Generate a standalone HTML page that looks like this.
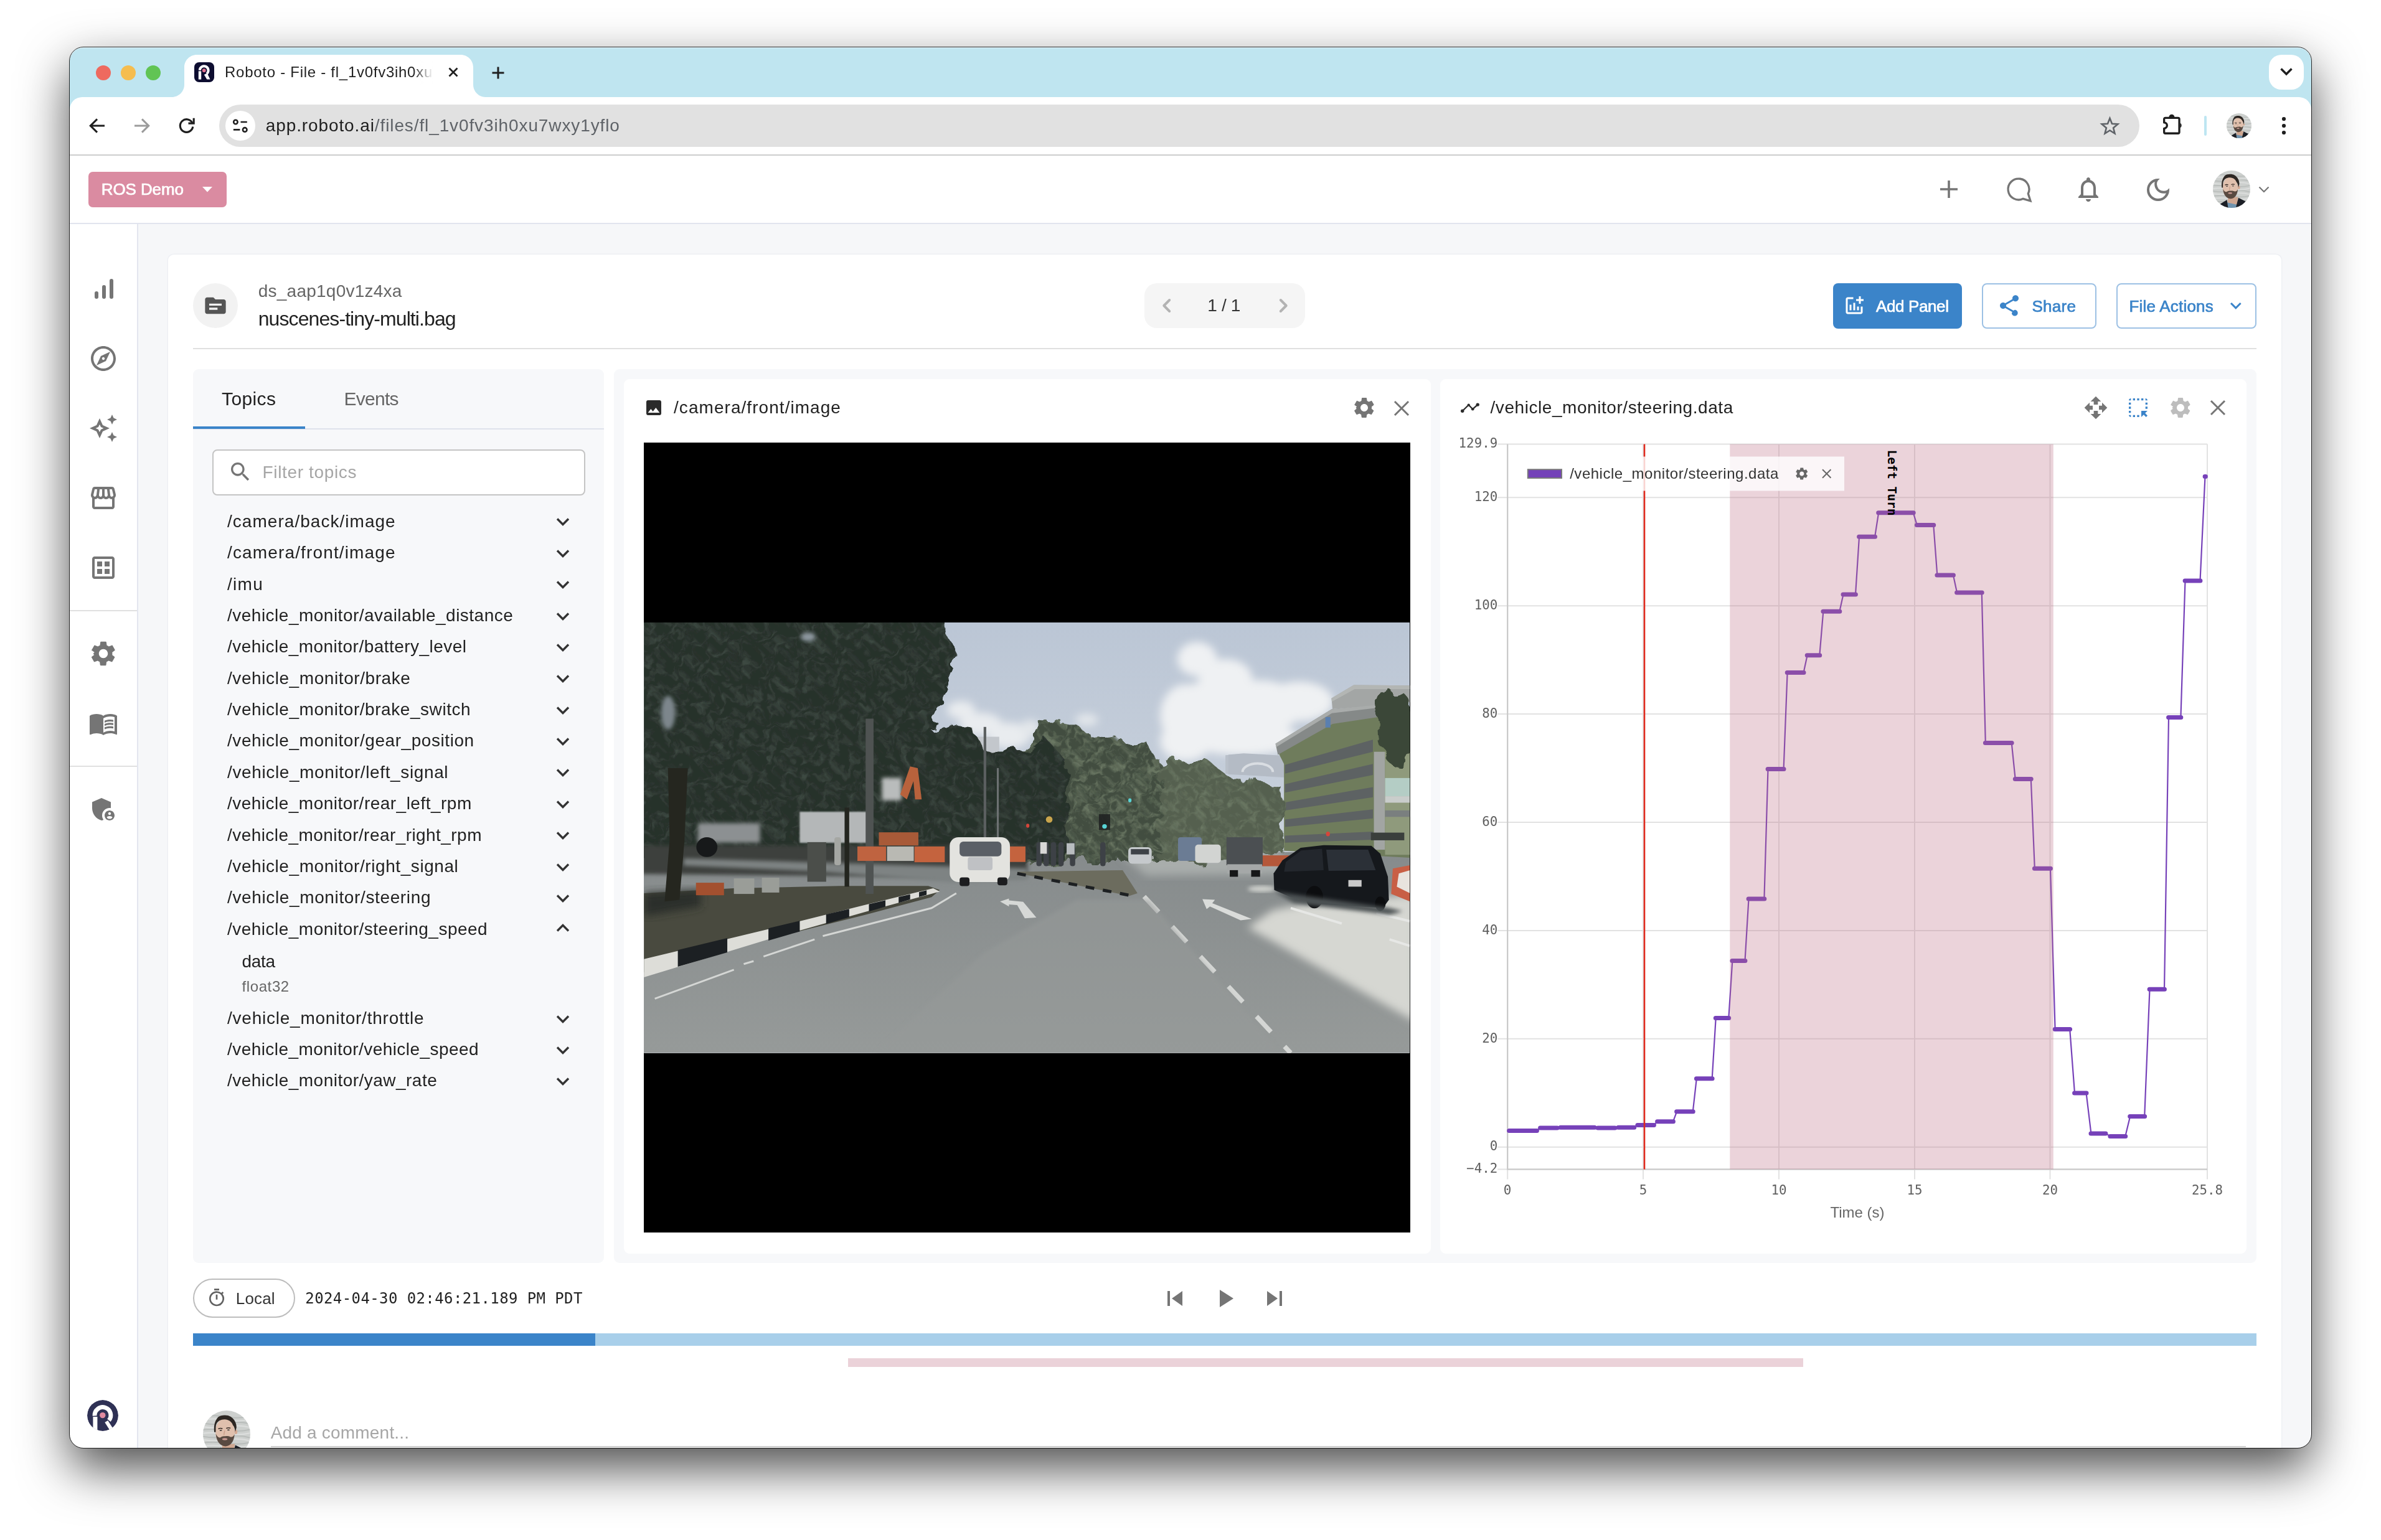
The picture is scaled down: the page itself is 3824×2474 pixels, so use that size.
<!DOCTYPE html>
<html lang="en"><head><meta charset="utf-8"><title>Roboto - File</title>
<style>
*{box-sizing:border-box;margin:0;padding:0}
html,body{width:3824px;height:2474px;overflow:hidden;background:#fff}
body{position:relative;font-family:"Liberation Sans",sans-serif;color:#222}
.a{position:absolute}
.t{position:absolute;white-space:pre}
#shadow{left:112px;top:75px;width:3600px;height:2251px;border-radius:22px;box-shadow:0 33px 80px rgba(0,0,0,.7)}
#win{left:0;top:0;width:3824px;height:2474px;clip-path:inset(75.900px 112px 148px 112px round 22px);background:#f6f7f9}
#winborder{left:110.800px;top:74.700px;width:3602.400px;height:2252.500px;border-radius:23px;border:1.200px solid rgba(0,0,0,.8);box-shadow:inset 0 1.200px 0 rgba(255,255,255,.5)}
svg{position:absolute;overflow:visible}
.ic{fill:#757575}
#texts{position:absolute;left:0;top:0;width:3824px;height:2474px;will-change:transform}

</style></head>
<body>
<div id="shadow" class="a"></div>
<div id="win" class="a">
<!-- ===== Chrome tab strip ===== -->
<div class="a" style="left:112px;top:75px;width:3600px;height:100px;background:#bfe5f0"></div>
<div class="a" style="left:154.2px;top:105px;width:24px;height:24px;border-radius:50%;background:#ee6a5f"></div>
<div class="a" style="left:193.8px;top:105px;width:24px;height:24px;border-radius:50%;background:#f5bd4f"></div>
<div class="a" style="left:233.8px;top:105px;width:24px;height:24px;border-radius:50%;background:#61c454"></div>
<!-- active tab -->
<svg style="left:276px;top:88px" width="504" height="68" viewBox="0 0 504 68"><path d="M0 68 C11 68 20 59 20 48 L20 20 C20 9 29 0 40 0 L464 0 C475 0 484 9 484 20 L484 48 C484 59 493 68 504 68 Z" fill="#fff"/></svg>
<!-- favicon -->
<svg style="left:312px;top:99.800px" width="32" height="32" viewBox="0 0 32 32"><rect width="32" height="32" rx="7.800" fill="#0d0d30"/><path d="M8.800 12.900A6.900 6.900 0 1 1 20.140 18.390" stroke="#fff" stroke-width="4" fill="none"/><path d="M15.800 19.900L20.700 17.500 25.500 27.600H20.300z" fill="#fff"/><rect x="6.800" y="14.300" width="4.400" height="13.300" fill="#fff"/><circle cx="15.750" cy="13.150" r="2.900" fill="#e0718f"/></svg>
<div class="a" style="left:664px;top:96px;width:36px;height:40px;z-index:5;background:linear-gradient(90deg,rgba(255,255,255,0),#fff 88%)"></div>
<svg style="left:720px;top:108px" width="16" height="16" viewBox="0 0 16 16"><path d="M1.5 1.5l13 13M14.5 1.5l-13 13" stroke="#1f1f1f" stroke-width="2.8" fill="none"/></svg>
<svg style="left:790px;top:106.5px" width="20" height="20" viewBox="0 0 20 20"><path d="M10 0.5v19M0.5 10h19" stroke="#1f1f1f" stroke-width="3" fill="none"/></svg>
<div class="a" style="left:3644px;top:88px;width:56px;height:56px;border-radius:20px;background:#fff"></div>
<svg style="left:3661px;top:108px" width="22" height="14" viewBox="0 0 22 14"><path d="M2.5 2.5l8.5 8.5 8.5-8.5" stroke="#1f1f1f" stroke-width="3.4" fill="none"/></svg>
<!-- ===== toolbar ===== -->
<div class="a" style="left:112px;top:156px;width:3600px;height:94px;background:#fff;border-radius:20px 20px 0 0"></div>
<div class="a" style="left:112px;top:248px;width:3600px;height:2px;background:#cfcfcf"></div>
<!-- back / fwd / reload -->
<svg style="left:143px;top:189px" width="26" height="26" viewBox="0 0 26 26"><path d="M25 13H3.500M13 2.300L2.300 13 13 23.700" stroke="#1f1f1f" stroke-width="3.100" fill="none"/></svg>
<svg style="left:215px;top:189px" width="26" height="26" viewBox="0 0 26 26"><path d="M1 13h21.500M13 2.300L23.700 13 13 23.700" stroke="#9b9b9b" stroke-width="3.100" fill="none"/></svg>
<svg style="left:287px;top:189px" width="26" height="26" viewBox="0 0 26 26"><path d="M22.150 9.100A10.300 10.300 0 1 0 22.800 14.600" stroke="#1f1f1f" stroke-width="3.100" fill="none"/><path d="M24.200 0.800V9.100H15.500" stroke="#1f1f1f" stroke-width="3.100" fill="none"/></svg>
<!-- omnibox -->
<div class="a" style="left:352px;top:168px;width:3083.5px;height:68px;border-radius:34px;background:#e1e1e1"></div>
<div class="a" style="left:361.800px;top:177.800px;width:48.400px;height:48.400px;border-radius:50%;background:#fff"></div>
<svg style="left:372px;top:188px" width="28" height="28" viewBox="0 0 28 28"><circle cx="6.400" cy="8" r="3.200" stroke="#1f1f1f" stroke-width="2.600" fill="none"/><path d="M14.500 8h10.300" stroke="#1f1f1f" stroke-width="2.700"/><circle cx="21.200" cy="20.400" r="3.300" stroke="#1f1f1f" stroke-width="2.600" fill="none"/><path d="M2.900 20.400h10.500" stroke="#1f1f1f" stroke-width="2.700"/></svg>
<svg style="left:3371.500px;top:185.500px" width="33" height="33" viewBox="0 0 33 33"><path d="M16.50 4.10L19.97 12.83L29.34 13.43L22.11 19.42L24.44 28.52L16.50 23.50L8.56 28.52L10.89 19.42L3.66 13.43L13.03 12.83Z" stroke="#5f6368" stroke-width="2.600" fill="none" stroke-linejoin="miter"/></svg>
<!-- extensions puzzle -->
<svg style="left:3470px;top:182px" width="40" height="38" viewBox="0 0 40 38"><path d="M5.650 14.900V9.350a2 2 0 0 1 2-2H28.050a2 2 0 0 1 2 2V30.250a2 2 0 0 1-2 2H7.650a2 2 0 0 1-2-2V24.300A4.700 4.700 0 0 0 5.650 14.900Z" fill="none" stroke="#1f1f1f" stroke-width="3.300" stroke-linejoin="round"/><path d="M13.400 6.300A4.500 4.500 0 0 1 22.400 6.300ZM31.400 15.600A4 4.400 0 0 1 31.400 23.600Z" fill="#1f1f1f"/></svg>
<div class="a" style="left:3540.200px;top:186px;width:3.800px;height:32px;border-radius:2px;background:#bde6f2"></div>
<svg style="left:3576px;top:182px" width="40" height="40"><use href="#ava" width="40" height="40"/></svg>
<svg style="left:3661.800px;top:186px" width="12" height="32" viewBox="0 0 12 32"><circle cx="6" cy="5" r="3.100" fill="#1f1f1f"/><circle cx="6" cy="16" r="3.100" fill="#1f1f1f"/><circle cx="6" cy="27" r="3.100" fill="#1f1f1f"/></svg>
<!-- ===== App header ===== -->
<div class="a" style="left:112px;top:250.500px;width:3600px;height:108px;background:#fff"></div>
<div class="a" style="left:112px;top:357.500px;width:3600px;height:2.500px;background:#e1e4ee"></div>
<div class="a" style="left:142px;top:276px;width:222px;height:56.500px;border-radius:7px;background:#da8ba1"></div>
<svg style="left:324.500px;top:300px" width="16" height="9" viewBox="0 0 16 9"><path d="M0 0h16L8 8.500z" fill="#fff"/></svg>
<!-- header icons -->
<svg style="left:3114px;top:288.100px" width="32" height="32" viewBox="0 0 32 32"><path d="M16 2v28M2 16h28" stroke="#757575" stroke-width="3.600" fill="none"/></svg>
<svg style="left:3220px;top:283px" width="46" height="46" viewBox="0 0 46 46"><path d="M29.100 36.300A16.900 16.900 0 1 1 37.300 28.100L41 39.800Z" stroke="#757575" stroke-width="3.300" fill="none" stroke-linejoin="miter"/></svg>
<svg style="left:3330px;top:280px" width="48" height="48" viewBox="0 0 24 24"><path class="ic" d="M12 22c1.100 0 2-.9 2-2h-4c0 1.100.9 2 2 2zm6-6v-5c0-3.070-1.630-5.640-4.500-6.320V4c0-.83-.67-1.500-1.500-1.500s-1.500.67-1.500 1.500v.68C7.640 5.360 6 7.920 6 11v5l-2 2v1h16v-1l-2-2zm-2 1H8v-6c0-2.480 1.510-4.500 4-4.500s4 2.020 4 4.500v6z"/></svg>
<svg style="left:3442px;top:280.500px" width="48" height="48" viewBox="0 0 24 24"><path class="ic" d="M9.370 5.510A7.350 7.350 0 0 0 9.100 7.500c0 4.080 3.320 7.400 7.400 7.400.68 0 1.350-.09 1.990-.27A7.014 7.014 0 0 1 12 19c-3.860 0-7-3.140-7-7 0-2.930 1.810-5.450 4.370-6.490zM12 3a9 9 0 1 0 9 9c0-.46-.04-.92-.1-1.360a5.389 5.389 0 0 1-4.400 2.260 5.403 5.403 0 0 1-3.140-9.800c-.44-.06-.9-.1-1.360-.1z"/></svg>
<svg style="left:3554px;top:274px" width="60" height="60"><use href="#ava" width="60" height="60"/></svg>
<svg style="left:3627px;top:299px" width="18" height="11" viewBox="0 0 18 11"><path d="M1.500 1.500l7.500 7.500 7.500-7.500" stroke="#757575" stroke-width="2.200" fill="none"/></svg>
<!-- ===== Sidebar ===== -->
<div class="a" style="left:112px;top:360px;width:108.500px;height:1970px;background:#fff"></div>
<div class="a" style="left:220px;top:360px;width:2px;height:1970px;background:#e3e6ef"></div>
<div class="a" style="left:112px;top:980px;width:108px;height:2px;background:#e0e0e0"></div>
<div class="a" style="left:112px;top:1230px;width:108px;height:2px;background:#e0e0e0"></div>
<!-- bars -->
<svg style="left:142px;top:440px" width="48" height="48" viewBox="0 0 48 48"><rect x="10" y="28" width="6" height="12" rx="3" class="ic"/><rect x="22" y="18" width="6" height="22" rx="3" class="ic"/><rect x="34" y="8" width="6" height="32" rx="3" class="ic"/></svg>
<svg style="left:142px;top:552px" width="48" height="48" viewBox="0 0 24 24"><path class="ic" d="M12 2C6.480 2 2 6.480 2 12s4.480 10 10 10 10-4.480 10-10S17.520 2 12 2zm0 18c-4.410 0-8-3.590-8-8s3.590-8 8-8 8 3.590 8 8-3.590 8-8 8zm-5.500-2.500l7.510-3.490L17.500 6.500 9.990 9.990 6.500 17.500zm5.500-6.600c.61 0 1.100.49 1.100 1.100s-.49 1.100-1.100 1.100-1.100-.49-1.100-1.100.49-1.100 1.100-1.100z"/></svg>
<svg style="left:142px;top:664px" width="48" height="48" viewBox="0 0 24 24"><path class="ic" d="M19 9l1.250-2.750L23 5l-2.750-1.250L19 1l-1.250 2.750L15 5l2.750 1.250L19 9zm0 6l-1.250 2.750L15 19l2.750 1.250L19 23l1.250-2.750L23 19l-2.750-1.250L19 15zm-7.500-5.500L9 4 6.500 9.500 1 12l5.500 2.500L9 20l2.500-5.500L17 12l-5.500-2.500zm-1.510 3.490L9 15.170l-.99-2.180L5.830 12l2.180-.99L9 8.830l.99 2.180 2.180.99-2.180.99z"/></svg>
<svg style="left:142px;top:776px" width="48" height="48" viewBox="0 0 24 24"><path class="ic" d="M21.900 8.890l-1.050-4.370c-.22-.9-1-1.520-1.910-1.520H5.050c-.9 0-1.690.63-1.900 1.520L2.100 8.890c-.24 1.020-.02 2.060.62 2.880.8.110.19.190.28.290V19c0 1.100.9 2 2 2h14c1.100 0 2-.9 2-2v-6.940c.09-.9.200-.18.280-.28.640-.82.870-1.870.62-2.890zm-2.990-3.900l1.050 4.370c.1.420.1.840-.25 1.170-.14.180-.44.470-.94.470-.61 0-1.140-.49-1.210-1.140L16.980 5l1.930-.01zM13 5h1.960l.54 4.520c.5.390-.7.780-.33 1.070-.22.260-.54.410-.95.410-.67 0-1.220-.59-1.220-1.310V5zM8.490 9.520L9.040 5H11v4.690c0 .72-.55 1.310-1.290 1.310-.34 0-.65-.15-.89-.41-.25-.29-.37-.68-.33-1.070zm-4.450-.16L5.050 5h1.970l-.58 4.860c-.8.650-.6 1.140-1.210 1.140-.49 0-.8-.29-.93-.47-.27-.32-.36-.75-.26-1.170zM5 19v-6.030c.8.010.15.030.23.030.87 0 1.660-.36 2.240-.95.600.6 1.400.95 2.310.95.870 0 1.650-.36 2.230-.93.590.57 1.390.93 2.290.93.840 0 1.640-.35 2.240-.95.580.59 1.370.95 2.240.95.080 0 .15-.2.230-.03V19H5z"/></svg>
<svg style="left:142px;top:887.500px" width="48" height="48" viewBox="0 0 24 24"><path class="ic" d="M19 3H5c-1.100 0-2 .9-2 2v14c0 1.100.9 2 2 2h14c1.100 0 2-.9 2-2V5c0-1.100-.9-2-2-2zm0 16H5V5h14v14zM7 13h4v4H7zm6 0h4v4h-4zM7 7h4v4H7zm6 0h4v4h-4z"/></svg>
<svg style="left:142px;top:1025.500px" width="48" height="48" viewBox="0 0 24 24"><path class="ic" d="M19.140 12.940c.04-.3.060-.61.060-.94 0-.32-.02-.64-.07-.94l2.030-1.580c.18-.14.230-.41.120-.61l-1.920-3.320c-.12-.22-.37-.29-.59-.22l-2.390.96c-.5-.38-1.030-.7-1.620-.94l-.36-2.540c-.04-.24-.24-.41-.48-.41h-3.840c-.24 0-.43.170-.47.410l-.36 2.540c-.59.240-1.130.57-1.620.94l-2.390-.96c-.22-.08-.47 0-.59.220L2.740 8.870c-.12.210-.8.470.12.610l2.030 1.580c-.5.300-.9.630-.9.940s.2.640.7.940l-2.030 1.580c-.18.140-.23.410-.12.610l1.920 3.320c.12.220.37.290.59.220l2.390-.96c.5.380 1.030.7 1.620.94l.36 2.540c.5.240.24.410.48.410h3.840c.24 0 .44-.17.470-.41l.36-2.540c.59-.24 1.130-.56 1.620-.94l2.390.96c.22.080.47 0 .59-.22l1.920-3.320c.12-.22.070-.47-.12-.61l-2.010-1.580zM12 15.600c-1.980 0-3.600-1.620-3.600-3.600s1.620-3.600 3.600-3.600 3.600 1.620 3.600 3.600-1.620 3.600-3.600 3.600z"/></svg>
<svg style="left:142px;top:1138px" width="48" height="48" viewBox="0 0 24 24"><path class="ic" d="M21 5c-1.110-.35-2.330-.5-3.500-.5-1.950 0-4.050.4-5.500 1.500-1.450-1.100-3.550-1.500-5.500-1.500S2.450 4.900 1 6v14.650c0 .25.250.5.500.5.100 0 .15-.5.250-.05C3.100 20.450 5.050 20 6.500 20c1.950 0 4.050.4 5.500 1.500 1.350-.85 3.800-1.500 5.500-1.500 1.650 0 3.350.3 4.750 1.050.1.050.15.050.25.050.25 0 .5-.25.5-.5V6c-.6-.45-1.250-.75-2-1zm0 13.500c-1.100-.35-2.300-.5-3.500-.5-1.700 0-4.150.65-5.500 1.500V8c1.350-.85 3.800-1.500 5.500-1.500 1.200 0 2.400.15 3.500.5v11.500z"/><path class="ic" d="M17.500 10.500c.88 0 1.730.09 2.500.26V9.240c-.79-.15-1.640-.24-2.500-.24-1.700 0-3.240.29-4.500.83v1.660c1.130-.64 2.700-.99 4.500-.99zM13 12.490v1.660c1.130-.64 2.700-.99 4.500-.99.880 0 1.730.09 2.500.26V11.900c-.79-.15-1.640-.24-2.500-.24-1.700 0-3.240.3-4.500.83zM17.500 14.330c-1.700 0-3.240.29-4.500.83v1.660c1.130-.64 2.700-.99 4.500-.99.880 0 1.730.09 2.500.26v-1.520c-.79-.16-1.640-.24-2.500-.24z"/></svg>
<svg style="left:142px;top:1276px" width="48" height="48" viewBox="0 0 24 24"><path class="ic" d="M17 11c.34 0 .67.040 1 .09V6.270L10.500 3 3 6.270v4.910c0 4.540 3.200 8.790 7.500 9.820.55-.13 1.080-.32 1.600-.55-.69-.98-1.100-2.170-1.100-3.450 0-3.310 2.690-6 6-6z"/><path class="ic" d="M17 13c-2.210 0-4 1.790-4 4s1.790 4 4 4 4-1.790 4-4-1.790-4-4-4zm0 1.380c.62 0 1.120.51 1.120 1.120s-.51 1.120-1.120 1.120-1.120-.51-1.120-1.120.5-1.120 1.120-1.120zm0 5.370c-.93 0-1.740-.46-2.240-1.170.05-.72 1.510-1.080 2.240-1.080s2.190.36 2.240 1.080c-.5.710-1.310 1.170-2.240 1.170z"/></svg>
<!-- roboto logo -->
<svg style="left:140px;top:2248.800px" width="50" height="50" viewBox="0 0 50 50"><clipPath id="lgc"><circle cx="25" cy="25" r="25"/></clipPath><g clip-path="url(#lgc)"><circle cx="25" cy="25" r="25" fill="#2f3155"/><path d="M12.100 25.500A12.900 12.900 0 1 1 34.900 32.800" stroke="#fff" stroke-width="6.900" fill="none"/><path d="M30.800 34.500L40 49" stroke="#fff" stroke-width="5.800"/><rect x="9.400" y="27" width="7" height="24" fill="#fff"/><circle cx="24.800" cy="24.600" r="4.700" fill="#e08aa0"/></g></svg>
<!-- ===== Main card ===== -->
<div class="a" style="left:270px;top:408.500px;width:3394px;height:1960px;background:#fff;border-radius:9px;box-shadow:0 0 0 1.500px #eef0f4"></div>
<div class="a" style="left:310px;top:455px;width:72px;height:72px;border-radius:50%;background:#f2f2f2"></div>
<svg style="left:326px;top:471px" width="40" height="40" viewBox="0 0 24 24"><path fill="#555" d="M20 6h-8l-2-2H4c-1.100 0-1.990.9-1.990 2L2 18c0 1.100.9 2 2 2h16c1.100 0 2-.9 2-2V8c0-1.100-.9-2-2-2zm-6 10H6v-2h8v2zm4-4H6v-2h12v2z"/></svg>
<div class="a" style="left:310px;top:559px;width:3313.500px;height:2px;background:#e0e0e0"></div>
<!-- pager -->
<div class="a" style="left:1838px;top:455px;width:258px;height:72px;border-radius:20px;background:#f5f5f5"></div>
<svg style="left:1865px;top:478px" width="18" height="26" viewBox="0 0 18 26"><path d="M13.200 4L4.300 13 13.200 22" stroke="#b3b3b3" stroke-width="4" fill="none" stroke-linecap="round" stroke-linejoin="round"/></svg>
<svg style="left:2052px;top:478px" width="18" height="26" viewBox="0 0 18 26"><path d="M4.800 4L13.700 13 4.800 22" stroke="#b3b3b3" stroke-width="4" fill="none" stroke-linecap="round" stroke-linejoin="round"/></svg>
<!-- buttons -->
<div class="a" style="left:2944px;top:455px;width:207px;height:72.500px;border-radius:8px;background:#3b84c9"></div>
<svg style="left:2959.500px;top:473.200px" width="36" height="36" viewBox="0 0 24 24"><path fill="#fff" d="M22 5v2h-3v3h-2V7h-3V5h3V2h2v3h3zm-3 14H5V5h6V3H5c-1.100 0-2 .9-2 2v14c0 1.100.9 2 2 2h14c1.100 0 2-.9 2-2v-6h-2v6zm-4-6v4h2v-4h-2zm-4 4h2V9h-2v8zm-2 0v-6H7v6h2z"/></svg>
<div class="a" style="left:3183px;top:455px;width:184px;height:72.500px;border-radius:8px;border:2px solid #9dc1e4;background:#fff"></div>
<svg style="left:3207px;top:471px" width="40" height="40" viewBox="0 0 24 24"><path fill="#3b84c9" d="M18 16.080c-.76 0-1.440.3-1.960.77L8.910 12.700c.05-.23.090-.46.090-.7s-.04-.47-.09-.7l7.050-4.110c.54.5 1.250.81 2.040.81 1.660 0 3-1.340 3-3s-1.340-3-3-3-3 1.340-3 3c0 .24.040.47.090.7L8.040 9.810C7.500 9.310 6.790 9 6 9c-1.660 0-3 1.340-3 3s1.340 3 3 3c.79 0 1.500-.31 2.040-.81l7.120 4.160c-.5.210-.8.430-.8.650 0 1.610 1.310 2.920 2.920 2.920s2.920-1.310 2.920-2.920-1.310-2.920-2.920-2.920z"/></svg>
<div class="a" style="left:3399px;top:455px;width:225px;height:72.500px;border-radius:8px;border:2px solid #9dc1e4;background:#fff"></div>
<svg style="left:3580.500px;top:485px" width="20" height="13" viewBox="0 0 20 13"><path d="M2 2l7.800 7.800 7.800-7.800" stroke="#3b84c9" stroke-width="3" fill="none"/></svg>
<!-- ===== Topics panel ===== -->
<div class="a" style="left:310px;top:592.500px;width:660px;height:1436.500px;border-radius:9px;background:#f7f8fa"></div>
<div class="a" style="left:310px;top:687.500px;width:660px;height:2.500px;background:#dfe2ec"></div>
<div class="a" style="left:310px;top:684.500px;width:180px;height:4.500px;background:#3b84c9"></div>
<div class="a" style="left:340.500px;top:721.500px;width:599px;height:74px;border-radius:8px;border:2px solid #c4c4c4;background:#fff"></div>
<svg style="left:366px;top:738px" width="40" height="40" viewBox="0 0 24 24"><path fill="#757575" d="M15.500 14h-.79l-.28-.27C15.410 12.590 16 11.110 16 9.500 16 5.910 13.090 3 9.500 3S3 5.910 3 9.500 5.910 16 9.500 16c1.610 0 3.090-.59 4.230-1.570l.27.280v.79l5 4.990L20.490 19l-4.990-5zm-6 0C7.010 14 5 11.990 5 9.500S7.010 5 9.500 5 14 7.010 14 9.500 11.990 14 9.500 14z"/></svg>
<svg style="left:892.5px;top:831.4px" width="22" height="14" viewBox="0 0 22 14"><path d="M2 2.500l9 9 9-9" stroke="#333" stroke-width="3.400" fill="none"/></svg>
<svg style="left:892.5px;top:881.8px" width="22" height="14" viewBox="0 0 22 14"><path d="M2 2.500l9 9 9-9" stroke="#333" stroke-width="3.400" fill="none"/></svg>
<svg style="left:892.5px;top:932.1px" width="22" height="14" viewBox="0 0 22 14"><path d="M2 2.500l9 9 9-9" stroke="#333" stroke-width="3.400" fill="none"/></svg>
<svg style="left:892.5px;top:982.5px" width="22" height="14" viewBox="0 0 22 14"><path d="M2 2.500l9 9 9-9" stroke="#333" stroke-width="3.400" fill="none"/></svg>
<svg style="left:892.5px;top:1032.9px" width="22" height="14" viewBox="0 0 22 14"><path d="M2 2.500l9 9 9-9" stroke="#333" stroke-width="3.400" fill="none"/></svg>
<svg style="left:892.5px;top:1083.2px" width="22" height="14" viewBox="0 0 22 14"><path d="M2 2.500l9 9 9-9" stroke="#333" stroke-width="3.400" fill="none"/></svg>
<svg style="left:892.5px;top:1133.6px" width="22" height="14" viewBox="0 0 22 14"><path d="M2 2.500l9 9 9-9" stroke="#333" stroke-width="3.400" fill="none"/></svg>
<svg style="left:892.5px;top:1184.0px" width="22" height="14" viewBox="0 0 22 14"><path d="M2 2.500l9 9 9-9" stroke="#333" stroke-width="3.400" fill="none"/></svg>
<svg style="left:892.5px;top:1234.4px" width="22" height="14" viewBox="0 0 22 14"><path d="M2 2.500l9 9 9-9" stroke="#333" stroke-width="3.400" fill="none"/></svg>
<svg style="left:892.5px;top:1284.7px" width="22" height="14" viewBox="0 0 22 14"><path d="M2 2.500l9 9 9-9" stroke="#333" stroke-width="3.400" fill="none"/></svg>
<svg style="left:892.5px;top:1335.1px" width="22" height="14" viewBox="0 0 22 14"><path d="M2 2.500l9 9 9-9" stroke="#333" stroke-width="3.400" fill="none"/></svg>
<svg style="left:892.5px;top:1385.5px" width="22" height="14" viewBox="0 0 22 14"><path d="M2 2.500l9 9 9-9" stroke="#333" stroke-width="3.400" fill="none"/></svg>
<svg style="left:892.5px;top:1435.8px" width="22" height="14" viewBox="0 0 22 14"><path d="M2 2.500l9 9 9-9" stroke="#333" stroke-width="3.400" fill="none"/></svg>
<svg style="left:892.5px;top:1484.2px" width="22" height="14" viewBox="0 0 22 14"><path d="M2 11.500l9-9 9 9" stroke="#333" stroke-width="3.400" fill="none"/></svg>
<svg style="left:892.5px;top:1629.8px" width="22" height="14" viewBox="0 0 22 14"><path d="M2 2.500l9 9 9-9" stroke="#333" stroke-width="3.400" fill="none"/></svg>
<svg style="left:892.5px;top:1679.5px" width="22" height="14" viewBox="0 0 22 14"><path d="M2 2.500l9 9 9-9" stroke="#333" stroke-width="3.400" fill="none"/></svg>
<svg style="left:892.5px;top:1729.8px" width="22" height="14" viewBox="0 0 22 14"><path d="M2 2.500l9 9 9-9" stroke="#333" stroke-width="3.400" fill="none"/></svg>
<!-- ===== Panels container ===== -->
<div class="a" style="left:986px;top:592.500px;width:2637.500px;height:1436.500px;border-radius:9px;background:#f7f8fa"></div>
<div class="a" style="left:1002px;top:609px;width:1295.500px;height:1404.500px;border-radius:9px;background:#fff"></div>
<div class="a" style="left:2312.500px;top:609px;width:1295.500px;height:1404.500px;border-radius:9px;background:#fff"></div>
<svg style="left:1034px;top:638.500px" width="32" height="32" viewBox="0 0 24 24"><path fill="#2b2b2b" d="M21 19V5c0-1.100-.9-2-2-2H5c-1.100 0-2 .9-2 2v14c0 1.100.9 2 2 2h14c1.100 0 2-.9 2-2zM8.500 13.500l2.500 3.010L14.500 12l4.500 6H5l3.500-4.500z"/></svg>
<svg style="left:2171px;top:635px" width="40" height="40" viewBox="0 0 24 24"><use href="#gear" class="ic"/></svg>
<svg style="left:2239px;top:643.500px" width="24" height="24" viewBox="0 0 24 24"><path d="M1 1l22 22M23 1L1 23" stroke="#757575" stroke-width="3" fill="none"/></svg>
<!-- image panel -->
<div class="a" style="left:1034.200px;top:710.600px;width:1230.500px;height:1269.800px;background:#000"></div>
<svg style="left:1034.3px;top:1000px" width="1230.3" height="692" viewBox="0 0 1230 692">
<defs>
<linearGradient id="sky" x1="0" y1="0" x2="0" y2="1"><stop offset="0" stop-color="#bbc6d5"/><stop offset="1" stop-color="#d7dce3"/></linearGradient>
<linearGradient id="road" x1="0" y1="0" x2="0" y2="1"><stop offset="0" stop-color="#868b8c"/><stop offset="1" stop-color="#969a99"/></linearGradient>
<filter id="b1" x="-5%" y="-5%" width="110%" height="110%"><feGaussianBlur stdDeviation="1.3"/></filter>
<filter id="b6" x="-20%" y="-20%" width="140%" height="140%"><feGaussianBlur stdDeviation="7"/></filter>
<filter id="b3" x="-20%" y="-20%" width="140%" height="140%"><feGaussianBlur stdDeviation="3"/></filter>
<filter id="leaf" x="-5%" y="-5%" width="110%" height="110%"><feTurbulence type="fractalNoise" baseFrequency="0.035" numOctaves="3" seed="4" result="n"/><feDisplacementMap in="SourceGraphic" in2="n" scale="38"/></filter>
<filter id="spk" x="0" y="0" width="100%" height="100%" color-interpolation-filters="sRGB"><feTurbulence type="fractalNoise" baseFrequency="0.07" numOctaves="3" seed="11" result="t"/><feColorMatrix in="t" type="matrix" values="0 0 0 0 0.24  0 0 0 0 0.29  0 0 0 0 0.26  2.4 0 0 0 -1.05" result="c"/><feComposite in="c" in2="SourceGraphic" operator="in"/></filter>
<filter id="spk2" x="0" y="0" width="100%" height="100%" color-interpolation-filters="sRGB"><feTurbulence type="fractalNoise" baseFrequency="0.08" numOctaves="3" seed="5" result="t"/><feColorMatrix in="t" type="matrix" values="0 0 0 0 0.42  0 0 0 0 0.47  0 0 0 0 0.39  2.4 0 0 0 -1.0" result="c"/><feComposite in="c" in2="SourceGraphic" operator="in"/></filter>
<clipPath id="pc"><rect width="1230" height="692"/></clipPath>
</defs>
<g clip-path="url(#pc)">
<rect width="1230" height="692" fill="url(#sky)"/>
<g filter="url(#b6)" fill="#eef0f2">
<ellipse cx="870.2" cy="149.5" rx="40.9" ry="50.0" fill="#eff1f3" />
<ellipse cx="888.4" cy="58.6" rx="31.8" ry="27.3" fill="#eff1f3" />
<ellipse cx="933.9" cy="90.5" rx="43.2" ry="31.8" fill="#eff1f3" />
<ellipse cx="906.6" cy="145.0" rx="63.6" ry="50.0" fill="#eff1f3" />
<ellipse cx="988.4" cy="135.9" rx="68.2" ry="43.2" fill="#eff1f3" />
<ellipse cx="1052.1" cy="126.8" rx="54.5" ry="31.8" fill="#eff1f3" />
<ellipse cx="870.2" cy="190.5" rx="40.9" ry="31.8" fill="#eff1f3" />
<ellipse cx="961.2" cy="185.9" rx="90.9" ry="27.3" fill="#eff1f3" />
<ellipse cx="509.3" cy="140.5" rx="22.7" ry="14.5" fill="#e9ecef" />
<ellipse cx="541.2" cy="163.2" rx="34.1" ry="18.2" fill="#e9ecef" />
<ellipse cx="586.6" cy="181.4" rx="34.1" ry="20.5" fill="#e9ecef" />
<ellipse cx="620.2" cy="170.0" rx="15.9" ry="13.6" fill="#e3e7eb" />
<ellipse cx="711.2" cy="156.4" rx="18.2" ry="10.0" fill="#e3e7eb" />
</g>
<rect x="527.5" y="183.6" width="43.2" height="29.5" fill="#c3c7cc" />
<polygon points="933.9,213.2 961.2,210.9 1031.6,215.5 1031.6,249.5 933.9,242.7" fill="#b9c0ca" />
<rect x="0.0" y="368.8" width="1230.4" height="322.8" fill="url(#road)" />
<polygon points="970,490 1010,462 1060,452 1240,436 1240,642" fill="#d6d7d2" filter="url(#b6)"/>
<ellipse cx="992" cy="428" rx="22" ry="5" fill="#cfd1cd" filter="url(#b3)"/>
<polygon points="765.7,372.3 1024.8,367.7 1024.8,404.1 806.6,406.4" fill="#a9adac" filter="url(#b6)"/>
<polygon points="938.7,212.6 963.1,210.3 1032.9,214.2 1032.9,248.3 938.7,244.1" fill="#b4bbc5" />
<path d="M961.4 240.2 A24.3 13.6 0 0 1 1010.1 240.2" stroke="#d9dde2" stroke-width="4" fill="none"/>
<polygon points="1018.2,207.7 1104.3,155.8 1177.3,146.1 1232.5,142.8 1232.5,378.1 1028.0,366.8 1028.0,227.2" fill="#6f7c5c" />
<polygon points="1029.6,228.8 1170.8,188.3 1170.8,207.7 1029.6,242.8" fill="#5d6263" />
<polygon points="1029.6,259.7 1170.8,227.2 1170.8,245.1 1029.6,273.3" fill="#5d6263" />
<polygon points="1029.6,288.9 1170.8,264.5 1170.8,280.8 1029.6,301.9" fill="#5d6263" />
<polygon points="1029.6,316.5 1170.8,300.2 1170.8,314.8 1029.6,328.5" fill="#5d6263" />
<polygon points="1029.6,342.4 1170.8,335.9 1170.8,348.9 1029.6,353.8" fill="#5d6263" />
<polygon points="1014.4,194.7 1104.3,139.6 1178.9,131.5 1178.9,151.9 1105.9,162.9 1018.2,212.6" fill="#858988" />
<polygon points="1014.4,194.7 1104.3,139.6 1178.9,131.5 1178.9,137.0 1104.9,145.7 1015.7,199.9" fill="#a9acab" />
<polygon points="1104.3,121.7 1140.0,100.6 1232.5,101.3 1232.5,128.2 1178.9,132.4 1105.9,138.9" fill="#a3a6a5" />
<polygon points="1104.3,121.7 1140.0,100.6 1232.5,101.3 1232.5,107.1 1141.6,107.1 1104.9,127.2" fill="#b3b6b4" />
<rect x="1172.4" y="207.7" width="17.9" height="157.4" fill="#a2a5a3" />
<rect x="1190.3" y="207.7" width="42.2" height="165.5" fill="#8f9a7c" />
<rect x="1190.3" y="249.9" width="42.2" height="29.2" fill="#b4cdc5" />
<rect x="1190.3" y="279.1" width="42.2" height="10.4" fill="#c9cdcb" />
<rect x="1190.3" y="301.9" width="42.2" height="10.4" fill="#7a7f7f" />
<rect x="1167.6" y="337.6" width="53.6" height="12.3" fill="#3a3f3c" />
<rect x="1094.5" y="151.9" width="8.1" height="16.9" fill="#5a7fb0" />
<ellipse cx="1208.1" cy="168.8" rx="30.8" ry="60.0" fill="#3b4737" filter="url(#leaf)"/>
<rect x="917.6" y="290.5" width="23.4" height="11.4" fill="#7097c3" />
<g filter="url(#leaf)">
<polygon points="815.7,385.9 815.7,231.4 852.1,220.0 906.6,222.3 933.9,242.7 974.8,254.1 1027.1,267.7 1027.1,372.3" fill="#55604f" />
<polygon points="597.5,385.9 597.5,213.2 629.3,176.8 665.7,154.1 711.2,176.8 752.1,185.9 806.6,190.5 829.3,226.8 829.3,385.9" fill="#434e41" />
<polygon points="815.7,385.9 815.7,231.4 852.1,220.0 906.6,222.3 933.9,242.7 974.8,254.1 1027.1,267.7 1027.1,372.3" fill="#000" filter="url(#spk2)"/>
<polygon points="597.5,385.9 597.5,213.2 629.3,176.8 665.7,154.1 711.2,176.8 752.1,185.9 806.6,190.5 829.3,226.8 829.3,385.9" fill="#000" filter="url(#spk2)"/>
</g>
<g filter="url(#leaf)">
<polygon points="-31.6,-32.3 468.4,-32.3 484.3,13.2 507.1,58.6 486.6,108.6 470.7,145.0 463.9,176.8 500.2,162.3 532.1,174.5 548.0,208.6 586.6,208.6 615.7,204.1 650.2,190.5 677.5,222.3 677.5,381.4 -31.6,381.4" fill="#28302b" />
<polygon points="-31.6,-32.3 468.4,-32.3 484.3,13.2 507.1,58.6 486.6,108.6 470.7,145.0 463.9,176.8 500.2,162.3 532.1,174.5 548.0,208.6 586.6,208.6 615.7,204.1 650.2,190.5 677.5,222.3 677.5,381.4 -31.6,381.4" fill="#000" filter="url(#spk)"/>
</g>
<ellipse cx="263.9" cy="23.2" rx="11.8" ry="7.3" fill="#8d979f" filter="url(#b3)"/>
<ellipse cx="38.9" cy="145.0" rx="11.4" ry="27.3" fill="#7d868c" filter="url(#b3)"/>
<rect x="382.1" y="249.5" width="31.8" height="36.4" fill="#b9bcbc" filter="url(#b3)"/>
<rect x="250.2" y="304.1" width="109.1" height="50.0" fill="#b4b7b8" filter="url(#b1)"/>
<rect x="86.6" y="322.3" width="100.0" height="31.8" fill="#8c9092" filter="url(#b3)"/>
<polygon points="-4.3,358.6 615.7,358.6 615.7,406.4 468.4,408.6 -4.3,404.1" fill="#3c413d" filter="url(#b3)"/>
<polygon points="63.9,379.1 450.2,390.5 615.7,395.0 615.7,413.2 495.7,417.7 268.4,399.5 63.9,390.5" fill="#7e8383" filter="url(#b3)"/>
<polygon points="0.0,435.0 144.5,427.1 313.8,423.3 456.7,423.3 475.2,429.7 462.0,441.3 356.1,469.4 197.4,509.1 0.0,562.0" fill="#494a3f" />
<polygon points="0.0,435.0 91.5,429.7 91.5,456.2 0.0,472.0" fill="#2a2f2b" filter="url(#b6)"/>
<polygon points="0.0,540.8 197.4,493.2 356.1,453.5 464.6,427.1 475.2,432.3 358.8,464.1 200.0,509.1 0.0,569.9" fill="#ddddd8"/>
<polygon points="54.5,526.2 133.9,507.1 133.9,530.1 54.5,553.1" fill="#1c2023" />
<polygon points="200.0,491.3 250.3,479.2 250.3,496.4 200.0,511.0" fill="#1c2023" />
<polygon points="292.6,469.0 329.7,460.2 329.7,473.5 292.6,484.2" fill="#1c2023" />
<polygon points="361.4,452.5 387.9,446.2 387.9,456.6 361.4,464.3" fill="#1c2023" />
<polygon points="409.1,441.1 427.6,436.7 427.6,445.1 409.1,450.5" fill="#1c2023" />
<polygon points="441.9,433.3 454.0,430.3 454.0,437.5 441.9,441.0" fill="#1c2023" />
<path d="M17.5,604.3 L144.5,557.8 M160.3,548.8 L176.2,544.0 M192.1,536.6 L274.1,509.1 M287.3,503.8 L462.0,458.8 L501.7,435.0" stroke="#d4d6d4" stroke-width="3" fill="none"/>
<path d="M803.3,440.3 L1038.8,691.6" stroke="#d4d6d4" stroke-width="7.500" stroke-dasharray="34 32" fill="none"/>
<polygon points="572.0,448.2 586.3,443.5 586.3,446.6 609.1,448.7 630.3,474.1 611.7,475.2 599.6,454.0 586.3,453.0 586.3,456.2" fill="#d6d8d6" />
<polygon points="897.0,444.5 917.1,445.6 912.8,450.9 976.3,476.3 958.4,478.4 909.1,456.2 903.8,460.4" fill="#dadcda" />
<path d="M1038.8,458.8 L1120.8,483.7 M1176.4,466.7 L1230.4,480.0 M1197.5,509.1 L1230.4,519.7" stroke="#e6e7e5" stroke-width="4" fill="none"/>
<polygon points="546.6,530.2 694.8,445.6 811.2,445.6 1022.9,691.6 372.0,691.6" fill="#969a99" opacity="0.55" filter="url(#b3)"/>
<polygon points="599.6,400.6 768.9,397.9 792.7,435.0 779.5,439.2 610.1,404.8" fill="#6c6c5e" />
<path d="M599.6,403.2 L779.5,438.2" stroke="#1d2022" stroke-width="5" stroke-dasharray="14 14" fill="none"/>
<polygon points="38.6,233.9 70.4,233.9 65.1,350.3 57.2,445.6 33.3,448.2 41.3,350.3" fill="#25261f" />
<rect x="356.1" y="154.5" width="12.7" height="281.5" fill="#4f5352" />
<rect x="262.5" y="353.0" width="30.2" height="63.5" fill="#4b4e4a" />
<rect x="322.3" y="297.4" width="7.4" height="127.0" fill="#23251f" />
<rect x="545.6" y="167.8" width="4.2" height="177.3" fill="#5b5f60" />
<rect x="566.8" y="233.9" width="3.2" height="111.1" fill="#6d7172" />
<rect x="342.9" y="359.8" width="46.0" height="23.3" fill="#bf6340" />
<rect x="390.5" y="359.8" width="42.9" height="23.3" fill="#b9b9b3" />
<rect x="434.5" y="359.8" width="48.7" height="25.4" fill="#c4633e" />
<polygon points="411.7,276.2 427.6,231.3 439.8,233.9 446.1,284.2 435.5,284.2 432.9,255.1 422.3,284.2" fill="#b8623c" />
<rect x="377.3" y="337.1" width="63.5" height="21.2" fill="#a85a38" />
<rect x="83.6" y="418.1" width="45.0" height="20.1" fill="#a3502f" />
<rect x="144.5" y="411.2" width="32.8" height="24.9" fill="#9a9d98" />
<rect x="189.4" y="410.1" width="28.0" height="23.8" fill="#9a9d98" />
<rect x="586.3" y="359.8" width="26.5" height="24.9" fill="#c4633e" />
<polygon points="1202.8,395.3 1230.4,390.0 1230.4,448.2 1200.2,436.0" fill="#c85f45" />
<polygon points="1212.4,403.2 1230.4,397.9 1230.4,435.0 1209.2,424.4" fill="#e8e3de" />
<rect x="991.2" y="374.1" width="45.0" height="17.5" fill="#b5583a" />
<rect x="491.1" y="345.0" width="96.8" height="72.0" fill="#e3e3df" rx="14"/>
<rect x="507.0" y="351.9" width="67.2" height="23.8" fill="#5a5f66" rx="6"/>
<rect x="520.2" y="376.8" width="39.7" height="21.2" fill="#bfc1c4" rx="4"/>
<rect x="507.0" y="409.6" width="15.9" height="13.8" fill="#1c1d1f" rx="4"/>
<rect x="567.8" y="409.6" width="15.9" height="12.7" fill="#1c1d1f" rx="4"/>
<rect x="777.9" y="360.9" width="37.6" height="26.5" fill="#c5c9cc" rx="6"/>
<rect x="782.1" y="364.1" width="29.1" height="8.5" fill="#3d4247" />
<rect x="857.8" y="345.0" width="38.1" height="38.1" fill="#6b7c94" rx="4"/>
<rect x="885.3" y="356.7" width="41.3" height="29.6" fill="#d2d4d2" rx="5"/>
<rect x="935.6" y="345.0" width="58.2" height="45.0" fill="#4b4f52" />
<rect x="936.7" y="388.4" width="56.1" height="14.8" fill="#a5a8a8" />
<rect x="940.9" y="397.9" width="13.2" height="10.6" fill="#161718" />
<rect x="975.3" y="397.9" width="14.3" height="10.6" fill="#161718" />
<polygon points="1011.3,403.2 1025.6,382.1 1054.7,362.0 1091.7,357.7 1168.4,358.8 1182.7,371.5 1194.9,408.5 1196.5,445.6 1187.0,458.8 1086.4,452.5 1038.8,441.3 1012.3,429.7" fill="#15181c" />
<polygon points="1095.9,365.1 1163.1,365.1 1175.3,397.9 1099.6,399.0" fill="#2b3037" />
<polygon points="1030.9,384.7 1055.7,366.2 1089.1,363.5 1091.7,397.9 1028.2,400.6" fill="#23272d" />
<ellipse cx="1076.9" cy="441.3" rx="13.8" ry="18.0" fill="#0c0d0f" />
<ellipse cx="1182.7" cy="451.9" rx="8.5" ry="11.6" fill="#0c0d0f" />
<rect x="1131.4" y="413.8" width="21.2" height="10.6" fill="#c9c9c9" />
<polygon points="1012.3,432.3 1197.5,458.8 1218.7,464.1 1197.5,469.4 1044.1,450.9" fill="#4e5254" filter="url(#b3)"/>
<ellipse cx="101.1" cy="360.9" rx="16.9" ry="15.9" fill="#17191a" />
<rect x="630.3" y="353.0" width="8.5" height="38.6" fill="#3d4146" rx="4"/>
<rect x="641.9" y="353.0" width="8.5" height="38.6" fill="#3d4146" rx="4"/>
<rect x="653.5" y="353.0" width="8.5" height="38.6" fill="#3d4146" rx="4"/>
<rect x="665.7" y="353.0" width="8.5" height="38.6" fill="#3d4146" rx="4"/>
<rect x="684.2" y="353.0" width="8.5" height="38.6" fill="#3d4146" rx="4"/>
<rect x="732.9" y="353.0" width="8.5" height="38.6" fill="#3d4146" rx="4"/>
<rect x="636.6" y="353.0" width="10.6" height="18.5" fill="#d7d7d5" />
<rect x="678.9" y="354.6" width="12.7" height="18.0" fill="#b9bdc0" />
<rect x="305.9" y="345.0" width="10.6" height="45.0" fill="#a5a7a3" rx="4"/>
<ellipse cx="739.8" cy="327.6" rx="3.7" ry="3.7" fill="#58d3d6" />
<ellipse cx="780.5" cy="285.8" rx="2.6" ry="3.2" fill="#58d3d6" />
<rect x="730.8" y="308.0" width="18.0" height="25.4" fill="#1b1d1e" opacity=".8"/>
<ellipse cx="739.8" cy="327.6" rx="3.7" ry="3.7" fill="#58d3d6" />
<ellipse cx="616.5" cy="326.5" rx="2.6" ry="3.2" fill="#d6453a" />
<ellipse cx="1098.6" cy="339.7" rx="3.2" ry="3.7" fill="#d6453a" />
<ellipse cx="650.9" cy="316.5" rx="5.3" ry="5.3" fill="#c9a44d" />
</g></svg>
<!-- plot panel header -->
<svg style="left:2344px;top:640px" width="34" height="30" viewBox="0 0 34 30"><path d="M4.700 20.300L14.700 10.500 21.200 17.200 29.200 10.100" stroke="#2b2b2b" stroke-width="2.300" fill="none" stroke-linejoin="round"/><circle cx="4.700" cy="20.300" r="2.700" fill="#2b2b2b"/><circle cx="14.700" cy="10.500" r="2.100" fill="#2b2b2b"/><circle cx="21.200" cy="17.200" r="2.300" fill="#2b2b2b"/><circle cx="29.200" cy="10.100" r="2.700" fill="#2b2b2b"/></svg>
<svg style="left:3346px;top:634.700px" width="40" height="40" viewBox="0 0 24 24"><path class="ic" d="M10 9h4V6h3l-5-5-5 5h3v3zm-1 1H6V7l-5 5 5 5v-3h3v-4zm14 2l-5-5v3h-3v4h3v3l5-5zm-9 3h-4v3H7l5 5 5-5h-3v-3z"/></svg>
<svg style="left:3414px;top:634.800px" width="40" height="40" viewBox="0 0 24 24"><path fill="#3b84c9" d="M17 5h-2V3h2v2zm-2 10v6l2.290-2.290L19.590 21 21 19.590l-2.290-2.290L21 15h-6zm4-6h2V7h-2v2zm0 4h2v-2h-2v2zm-8 8h2v-2h-2v2zM7 5h2V3H7v2zM3 17h2v-2H3v2zm2 4v-2H3c0 1.100.9 2 2 2zM19 3v2h2c0-1.100-.9-2-2-2zm-8 2h2V3h-2v2zM3 9h2V7H3v2zm4 12h2v-2H7v2zm-4-8h2v-2H3v2zm0-8h2V3c-1.100 0-2 .9-2 2z"/></svg>
<svg style="left:3482px;top:634.800px" width="40" height="40" viewBox="0 0 24 24"><use href="#gear" fill="#bdbdbd"/></svg>
<svg style="left:3550px;top:643px" width="24" height="24" viewBox="0 0 24 24"><path d="M1 1l22 22M23 1L1 23" stroke="#757575" stroke-width="3" fill="none"/></svg>
<svg style="left:0;top:0" width="3824" height="2474" viewBox="0 0 3824 2474">
<path d="M2405.2 713.5H3545.0" stroke="#e2e2e2" stroke-width="2"/>
<path d="M2405.2 799.3H3545.0" stroke="#e2e2e2" stroke-width="2"/>
<path d="M2405.2 973.2H3545.0" stroke="#e2e2e2" stroke-width="2"/>
<path d="M2405.2 1147.1H3545.0" stroke="#e2e2e2" stroke-width="2"/>
<path d="M2405.2 1321.0H3545.0" stroke="#e2e2e2" stroke-width="2"/>
<path d="M2405.2 1494.9H3545.0" stroke="#e2e2e2" stroke-width="2"/>
<path d="M2405.2 1668.8H3545.0" stroke="#e2e2e2" stroke-width="2"/>
<path d="M2405.2 1842.7H3545.0" stroke="#e2e2e2" stroke-width="2"/>
<path d="M2405.2 1878.5H3545.0" stroke="#e2e2e2" stroke-width="2"/>
<path d="M2421.2 713.5V1894.5" stroke="#e2e2e2" stroke-width="2"/>
<path d="M2639.0 713.5V1894.5" stroke="#e2e2e2" stroke-width="2"/>
<path d="M2857.0 713.5V1894.5" stroke="#e2e2e2" stroke-width="2"/>
<path d="M3075.0 713.5V1894.5" stroke="#e2e2e2" stroke-width="2"/>
<path d="M3292.5 713.5V1894.5" stroke="#e2e2e2" stroke-width="2"/>
<path d="M3545.0 713.5V1894.5" stroke="#e2e2e2" stroke-width="2"/>
<path d="M2421.2 713.5V1878.5H3545.0" stroke="#c8c8c8" stroke-width="2" fill="none"/>
<path d="M2424.0 1816.4L2468.0 1816.4L2474.0 1812L2500.6 1812L2506.6 1811.3L2560.6 1811.3L2566.6 1812L2593.4 1812L2599.4 1811.3L2624.3 1811.3L2630.3 1807.6L2656.0 1807.6L2662.0 1801.8L2687.0 1801.8L2693.0 1785.8L2718.8 1785.8L2724.8 1732.7L2749.7 1732.7L2755.7 1635.6L2776.3 1635.6L2782.3 1543.6L2802.5 1543.6L2808.5 1444.0L2833.4 1444.0L2839.5 1235.4L2864.6 1235.4L2870.6 1080.4L2896.6 1080.4L2902.6 1052.8L2922.3 1052.8L2928.3 982.2L2954.4 982.2L2960.4 955.1L2980.0 955.1L2986.0 862.3L3011.1 862.3L3017.1 823.8L3072.8 823.8L3078.8 843.6L3105.3 843.6L3111.3 924L3137.0 924L3143.0 952.1L3182.8 952.1L3188.8 1193.4L3230.7 1193.4L3236.7 1251.6L3261.8 1251.6L3267.8 1395.3L3293.0 1395.3L3300.6 1653.4L3324.2 1653.4L3332.0 1756L3350.6 1756L3358.4 1820.9L3381.5 1820.9L3389.3 1825.4L3413.3 1825.4L3421.1 1793.6L3444.2 1793.6L3452.5 1589.3L3476.0 1589.3L3483.0 1152.6L3502.4 1152.6L3509.5 932.9L3533.5 932.9L3541.5 765.4L3542.0 765.4" stroke="#7641b9" stroke-width="2.2" fill="none" stroke-linejoin="round"/>
<path d="M2423.6 1816.4H2468.4M2473.6 1812H2501.0M2506.2 1811.3H2561.0M2566.2 1812H2593.8M2599.0 1811.3H2624.7M2629.9 1807.6H2656.4M2661.6 1801.8H2687.4M2692.6 1785.8H2719.2M2724.4 1732.7H2750.1M2755.3 1635.6H2776.7M2781.9 1543.6H2802.9M2808.1 1444.0H2833.8M2839.1 1235.4H2865.0M2870.2 1080.4H2897.0M2902.2 1052.8H2922.7M2927.9 982.2H2954.8M2960.0 955.1H2980.4M2985.6 862.3H3011.5M3016.7 823.8H3073.2M3078.4 843.6H3105.7M3110.9 924H3137.4M3142.6 952.1H3183.2M3188.4 1193.4H3231.1M3236.3 1251.6H3262.2M3267.4 1395.3H3293.4M3300.2 1653.4H3324.6M3331.6 1756H3351.0M3358.0 1820.9H3381.9M3388.9 1825.4H3413.7M3420.7 1793.6H3444.6M3452.1 1589.3H3476.4M3482.6 1152.6H3502.8M3509.1 932.9H3533.9M3541.1 765.4H3542.4" stroke="#7641b9" stroke-width="7" fill="none" stroke-linecap="round"/>
<rect x="2778.3" y="713.5" width="519.5" height="1165.0" fill="rgba(188,108,132,0.30)"/>
<path d="M2641 713.5V1878.5" stroke="#e02a1d" stroke-width="2.6"/>
<text transform="translate(3031.5 722.5) rotate(90)" font-family="'DejaVu Sans Mono','Liberation Mono',monospace" font-weight="700" font-size="19.6" fill="#000">Left Turn</text>
<rect x="2437" y="733.5" width="525" height="55" fill="rgba(255,255,255,0.8)"/>
<rect x="2453.8" y="754.2" width="54.2" height="13.8" fill="#7442b8" stroke="#7a7a7a" stroke-width="2"/>
<svg x="2881.8" y="749" width="24" height="24" viewBox="0 0 24 24"><use href="#gear" fill="#666"/></svg>
<path d="M2927 754.3l13.400 13.400M2940.400 754.300l-13.400 13.400" stroke="#666" stroke-width="2" fill="none"/>
</svg>
<!-- ===== Footer ===== -->
<div class="a" style="left:310px;top:2053.900px;width:163.500px;height:63.600px;border-radius:32px;border:2px solid #bdbdbd;background:#fff"></div>
<svg style="left:332px;top:2069px" width="32" height="32" viewBox="0 0 24 24"><path fill="#616161" d="M15 1H9v2h6V1zm-4 13h2V8h-2v6zm8.030-6.610l1.420-1.420c-.43-.51-.9-.99-1.410-1.410l-1.420 1.420A8.962 8.962 0 0 0 12 4c-4.970 0-9 4.030-9 9s4.020 9 9 9a8.994 8.994 0 0 0 7.030-14.610zM12 20c-3.870 0-7-3.130-7-7s3.130-7 7-7 7 3.130 7 7-3.130 7-7 7z"/></svg>
<svg style="left:1863px;top:2062px" width="48" height="48" viewBox="0 0 24 24"><path class="ic" d="M6 6h2v12H6zm3.500 6l8.500 6V6z"/></svg>
<svg style="left:1943px;top:2062px" width="48" height="48" viewBox="0 0 24 24"><path class="ic" d="M8 5v14l11-7z"/></svg>
<svg style="left:2023px;top:2062px" width="48" height="48" viewBox="0 0 24 24"><path class="ic" d="M6 18l8.500-6L6 6v12zM16 6v12h2V6h-2z"/></svg>
<div class="a" style="left:310px;top:2142px;width:3313.500px;height:20px;background:#a8cfea"></div>
<div class="a" style="left:310px;top:2142px;width:646px;height:20px;background:#3b84c9"></div>
<div class="a" style="left:1362px;top:2182px;width:1534px;height:13.500px;background:#ebd2d9"></div>
<svg style="left:326px;top:2266px" width="76" height="76"><use href="#ava" width="76" height="76"/></svg>
<div class="a" style="left:434.500px;top:2322.500px;width:3172.500px;height:2px;background:#cfcfcf"></div>
<div id="texts">
<div class="t" style="top:103.88px;font-size:24px;line-height:24px;color:#1f1f1f;letter-spacing:0.728px;left:361.00px;">Roboto - File - fl_1v0fv3ih0xu</div>
<div class="t" style="top:188.20px;font-size:28px;line-height:28px;color:#5f6368;letter-spacing:0.889px;left:426.80px;"><span style="color:#1f1f1f">app.roboto.ai</span>/files/fl_1v0fv3ih0xu7wxy1yflo</div>
<div class="t" style="top:291.09px;font-size:26px;line-height:26px;color:#fff;letter-spacing:-0.115px;left:162.80px;-webkit-text-stroke:0.7px #fff;">ROS Demo</div>
<div class="t" style="top:454.10px;font-size:28px;line-height:28px;color:#666;letter-spacing:0.247px;left:414.70px;">ds_aap1q0v1z4xa</div>
<div class="t" style="top:496.11px;font-size:32px;line-height:32px;color:#212121;letter-spacing:-0.910px;left:414.70px;">nuscenes-tiny-multi.bag</div>
<div class="t" style="top:477.30px;font-size:28px;line-height:28px;color:#333;letter-spacing:-0.357px;left:1939.30px;">1 / 1</div>
<div class="t" style="top:478.89px;font-size:26px;line-height:26px;color:#fff;letter-spacing:-0.376px;left:3013.00px;-webkit-text-stroke:0.7px #fff;">Add Panel</div>
<div class="t" style="top:478.89px;font-size:26px;line-height:26px;color:#3b84c9;letter-spacing:0.282px;left:3263.50px;-webkit-text-stroke:0.7px #3b84c9;">Share</div>
<div class="t" style="top:478.89px;font-size:26px;line-height:26px;color:#3b84c9;letter-spacing:0.212px;left:3419.50px;-webkit-text-stroke:0.7px #3b84c9;">File Actions</div>
<div class="t" style="top:625.50px;font-size:30px;line-height:30px;color:#212121;letter-spacing:0.376px;left:356.00px;">Topics</div>
<div class="t" style="top:625.50px;font-size:30px;line-height:30px;color:#666;letter-spacing:-0.720px;left:552.50px;">Events</div>
<div class="t" style="top:745.40px;font-size:28px;line-height:28px;color:#a6a6a6;letter-spacing:0.657px;left:421.50px;">Filter topics</div>
<div class="t" style="top:823.90px;font-size:28px;line-height:28px;color:#222;letter-spacing:1.033px;left:365.00px;">/camera/back/image</div>
<div class="t" style="top:874.27px;font-size:28px;line-height:28px;color:#222;letter-spacing:1.142px;left:365.00px;">/camera/front/image</div>
<div class="t" style="top:924.64px;font-size:28px;line-height:28px;color:#222;letter-spacing:1.273px;left:365.00px;">/imu</div>
<div class="t" style="top:975.01px;font-size:28px;line-height:28px;color:#222;letter-spacing:0.493px;left:365.00px;">/vehicle_monitor/available_distance</div>
<div class="t" style="top:1025.38px;font-size:28px;line-height:28px;color:#222;letter-spacing:0.469px;left:365.00px;">/vehicle_monitor/battery_level</div>
<div class="t" style="top:1075.75px;font-size:28px;line-height:28px;color:#222;letter-spacing:0.582px;left:365.00px;">/vehicle_monitor/brake</div>
<div class="t" style="top:1126.12px;font-size:28px;line-height:28px;color:#222;letter-spacing:0.556px;left:365.00px;">/vehicle_monitor/brake_switch</div>
<div class="t" style="top:1176.49px;font-size:28px;line-height:28px;color:#222;letter-spacing:0.564px;left:365.00px;">/vehicle_monitor/gear_position</div>
<div class="t" style="top:1226.86px;font-size:28px;line-height:28px;color:#222;letter-spacing:0.623px;left:365.00px;">/vehicle_monitor/left_signal</div>
<div class="t" style="top:1277.23px;font-size:28px;line-height:28px;color:#222;letter-spacing:0.484px;left:365.00px;">/vehicle_monitor/rear_left_rpm</div>
<div class="t" style="top:1327.60px;font-size:28px;line-height:28px;color:#222;letter-spacing:0.439px;left:365.00px;">/vehicle_monitor/rear_right_rpm</div>
<div class="t" style="top:1377.97px;font-size:28px;line-height:28px;color:#222;letter-spacing:0.570px;left:365.00px;">/vehicle_monitor/right_signal</div>
<div class="t" style="top:1428.34px;font-size:28px;line-height:28px;color:#222;letter-spacing:0.633px;left:365.00px;">/vehicle_monitor/steering</div>
<div class="t" style="top:1478.71px;font-size:28px;line-height:28px;color:#222;letter-spacing:0.483px;left:365.00px;">/vehicle_monitor/steering_speed</div>
<div class="t" style="top:1531.00px;font-size:28px;line-height:28px;color:#222;letter-spacing:-0.275px;left:388.50px;">data</div>
<div class="t" style="top:1572.58px;font-size:24px;line-height:24px;color:#666;letter-spacing:0.605px;left:388.50px;">float32</div>
<div class="t" style="top:1622.30px;font-size:28px;line-height:28px;color:#222;letter-spacing:0.765px;left:365.00px;">/vehicle_monitor/throttle</div>
<div class="t" style="top:1672.00px;font-size:28px;line-height:28px;color:#222;letter-spacing:0.444px;left:365.00px;">/vehicle_monitor/vehicle_speed</div>
<div class="t" style="top:1722.30px;font-size:28px;line-height:28px;color:#222;letter-spacing:0.477px;left:365.00px;">/vehicle_monitor/yaw_rate</div>
<div class="t" style="top:640.60px;font-size:28px;line-height:28px;color:#222;letter-spacing:1.053px;left:1082.00px;">/camera/front/image</div>
<div class="t" style="top:640.90px;font-size:28px;line-height:28px;color:#222;letter-spacing:0.558px;left:2393.50px;">/vehicle_monitor/steering.data</div>
<div class="t" style="top:748.88px;font-size:24px;line-height:24px;color:#333;letter-spacing:0.517px;left:2521.20px;">/vehicle_monitor/steering.data</div>
<div class="t" style="top:702.20px;font-size:20.8px;line-height:20.8px;color:#5e5e5e;font-family:'DejaVu Sans Mono', 'Liberation Mono', monospace;right:1418.80px;">129.9</div>
<div class="t" style="top:788.00px;font-size:20.8px;line-height:20.8px;color:#5e5e5e;font-family:'DejaVu Sans Mono', 'Liberation Mono', monospace;right:1418.80px;">120</div>
<div class="t" style="top:961.90px;font-size:20.8px;line-height:20.8px;color:#5e5e5e;font-family:'DejaVu Sans Mono', 'Liberation Mono', monospace;right:1418.80px;">100</div>
<div class="t" style="top:1135.80px;font-size:20.8px;line-height:20.8px;color:#5e5e5e;font-family:'DejaVu Sans Mono', 'Liberation Mono', monospace;right:1418.80px;">80</div>
<div class="t" style="top:1309.70px;font-size:20.8px;line-height:20.8px;color:#5e5e5e;font-family:'DejaVu Sans Mono', 'Liberation Mono', monospace;right:1418.80px;">60</div>
<div class="t" style="top:1483.60px;font-size:20.8px;line-height:20.8px;color:#5e5e5e;font-family:'DejaVu Sans Mono', 'Liberation Mono', monospace;right:1418.80px;">40</div>
<div class="t" style="top:1657.50px;font-size:20.8px;line-height:20.8px;color:#5e5e5e;font-family:'DejaVu Sans Mono', 'Liberation Mono', monospace;right:1418.80px;">20</div>
<div class="t" style="top:1831.40px;font-size:20.8px;line-height:20.8px;color:#5e5e5e;font-family:'DejaVu Sans Mono', 'Liberation Mono', monospace;right:1418.80px;">0</div>
<div class="t" style="top:1867.20px;font-size:20.8px;line-height:20.8px;color:#5e5e5e;font-family:'DejaVu Sans Mono', 'Liberation Mono', monospace;right:1418.80px;">−4.2</div>
<div class="t" style="top:1901.60px;font-size:20.8px;line-height:20.8px;color:#5e5e5e;font-family:'DejaVu Sans Mono', 'Liberation Mono', monospace;left:2421.00px;transform:translateX(-50%);">0</div>
<div class="t" style="top:1901.60px;font-size:20.8px;line-height:20.8px;color:#5e5e5e;font-family:'DejaVu Sans Mono', 'Liberation Mono', monospace;left:2639.00px;transform:translateX(-50%);">5</div>
<div class="t" style="top:1901.60px;font-size:20.8px;line-height:20.8px;color:#5e5e5e;font-family:'DejaVu Sans Mono', 'Liberation Mono', monospace;left:2857.00px;transform:translateX(-50%);">10</div>
<div class="t" style="top:1901.60px;font-size:20.8px;line-height:20.8px;color:#5e5e5e;font-family:'DejaVu Sans Mono', 'Liberation Mono', monospace;left:3075.00px;transform:translateX(-50%);">15</div>
<div class="t" style="top:1901.60px;font-size:20.8px;line-height:20.8px;color:#5e5e5e;font-family:'DejaVu Sans Mono', 'Liberation Mono', monospace;left:3292.50px;transform:translateX(-50%);">20</div>
<div class="t" style="top:1901.60px;font-size:20.8px;line-height:20.8px;color:#5e5e5e;font-family:'DejaVu Sans Mono', 'Liberation Mono', monospace;left:3545.00px;transform:translateX(-50%);">25.8</div>
<div class="t" style="top:1936.08px;font-size:24px;line-height:24px;color:#666;left:2983.00px;transform:translateX(-50%);">Time (s)</div>
<div class="t" style="top:2073.39px;font-size:26px;line-height:26px;color:#333;letter-spacing:0.169px;left:378.80px;">Local</div>
<div class="t" style="top:2073.60px;font-size:24px;line-height:24px;color:#222;font-family:'DejaVu Sans Mono', 'Liberation Mono', monospace;letter-spacing:0.401px;left:490.30px;">2024-04-30 02:46:21.189 PM PDT</div>
<div class="t" style="top:2287.70px;font-size:28px;line-height:28px;color:#a6a6a6;letter-spacing:0.198px;left:434.70px;">Add a comment...</div>
</div>
<svg width="0" height="0"><defs><symbol id="ava" viewBox="0 0 60 60"><clipPath id="avc"><circle cx="30" cy="30" r="30"/></clipPath><g clip-path="url(#avc)">
<rect width="60" height="60" fill="#cdd0ce"/>
<path d="M0 8q15-3 30 0t30-1M0 16q15 3 30 0t30 1M0 24.500q15-2 30 .5t30-1M0 33q15 2.500 30 0t30 1.500M0 41q15-2 30 .5t30-1M0 49q15 2 30 0t30 1" stroke="#b9bdbb" stroke-width="1.600" fill="none"/>
<path d="M0 12q15-3 30 0t30-1M0 20.500q15 3 30 0t30 1M0 29q15-2 30 .5t30-1M0 37q15 2.500 30 0t30 1.500M0 45q15-2 30 .5t30-1" stroke="#dcdedd" stroke-width="1.800" fill="none"/>
<path d="M24.400 43.500L40.500 42.200 38.400 55.500 23.900 53z" fill="#cfa791"/>
<path d="M22.900 51.200L38.600 54.800 37.200 61H24z" fill="#6f93ae"/>
<path d="M10.500 54.500L22.600 47 24.600 61H14z" fill="#1c1f26"/><path d="M41 43.800L52.500 49.500 46 57 36.800 61 38 55z" fill="#1c1f26"/>
<ellipse cx="41.700" cy="27" rx="1.900" ry="3" fill="#d5ab95"/>
<ellipse cx="27.900" cy="27.300" rx="12.100" ry="17.200" fill="#e0c0ad"/>
<path d="M14.300 27.500C13.500 20 14.500 13.500 19.200 8.200 23 5.300 31 5 35.300 7.800 40 10.800 42.500 16 42.500 21.500L41 27C40.500 23 39.500 20 37.900 18.500 36.500 14.500 33 11.500 27.500 11.300 22 11.300 18 14 16.600 18 16 21 16.300 24 16.100 27.500z" fill="#2d2723"/>
<path d="M16.300 29.500C17 40 22.500 45.300 28.500 45.300 34.500 45.300 39.600 39.500 40 30 38.600 33 36.600 34.200 34.500 33.300 32 32 30 32.500 28 32.500 26 32.500 24 32.700 22.500 33.900 20.500 35.300 17.800 33.500 16.300 29.500z" fill="#4a3d35" opacity=".9"/>
<ellipse cx="27.700" cy="36.300" rx="3.300" ry="1.300" fill="#c79a93"/>
<path d="M19.400 23.300q2.500-1.400 5.300-.300M29.500 22.700q2.600-1.400 5.300-.300" stroke="#3a2f29" stroke-width="1.300" fill="none"/>
<ellipse cx="22.600" cy="25.300" rx="1.600" ry=".8" fill="#4a4440"/><ellipse cx="32.300" cy="24.700" rx="1.600" ry=".8" fill="#4a4440"/>
<path d="M27.600 25.500C27 28 26.300 30 26.800 31.200" stroke="#c9a08b" stroke-width="1.200" fill="none"/>
</g></symbol><path id="gear" d="M19.140 12.940c.04-.3.060-.61.060-.94 0-.32-.02-.64-.07-.94l2.030-1.580c.18-.14.230-.41.120-.61l-1.920-3.320c-.12-.22-.37-.29-.59-.22l-2.390.96c-.5-.38-1.030-.7-1.620-.94l-.36-2.540c-.04-.24-.24-.41-.48-.41h-3.840c-.24 0-.43.170-.47.410l-.36 2.540c-.59.240-1.130.57-1.620.94l-2.390-.96c-.22-.08-.47 0-.59.220L2.740 8.870c-.12.210-.8.470.12.610l2.030 1.580c-.5.300-.9.630-.9.940s.2.640.7.940l-2.030 1.580c-.18.140-.23.410-.12.610l1.920 3.320c.12.220.37.290.59.220l2.390-.96c.5.380 1.030.7 1.620.94l.36 2.540c.5.240.24.410.48.410h3.840c.24 0 .44-.17.470-.41l.36-2.540c.59-.24 1.130-.56 1.620-.94l2.390.96c.22.080.47 0 .59-.22l1.920-3.320c.12-.22.070-.47-.12-.61l-2.010-1.580zM12 15.600c-1.980 0-3.600-1.620-3.600-3.600s1.620-3.600 3.600-3.600 3.600 1.620 3.600 3.600-1.620 3.600-3.600 3.600z"/></defs></svg>
</div>
<div id="winborder" class="a"></div>

</body></html>
